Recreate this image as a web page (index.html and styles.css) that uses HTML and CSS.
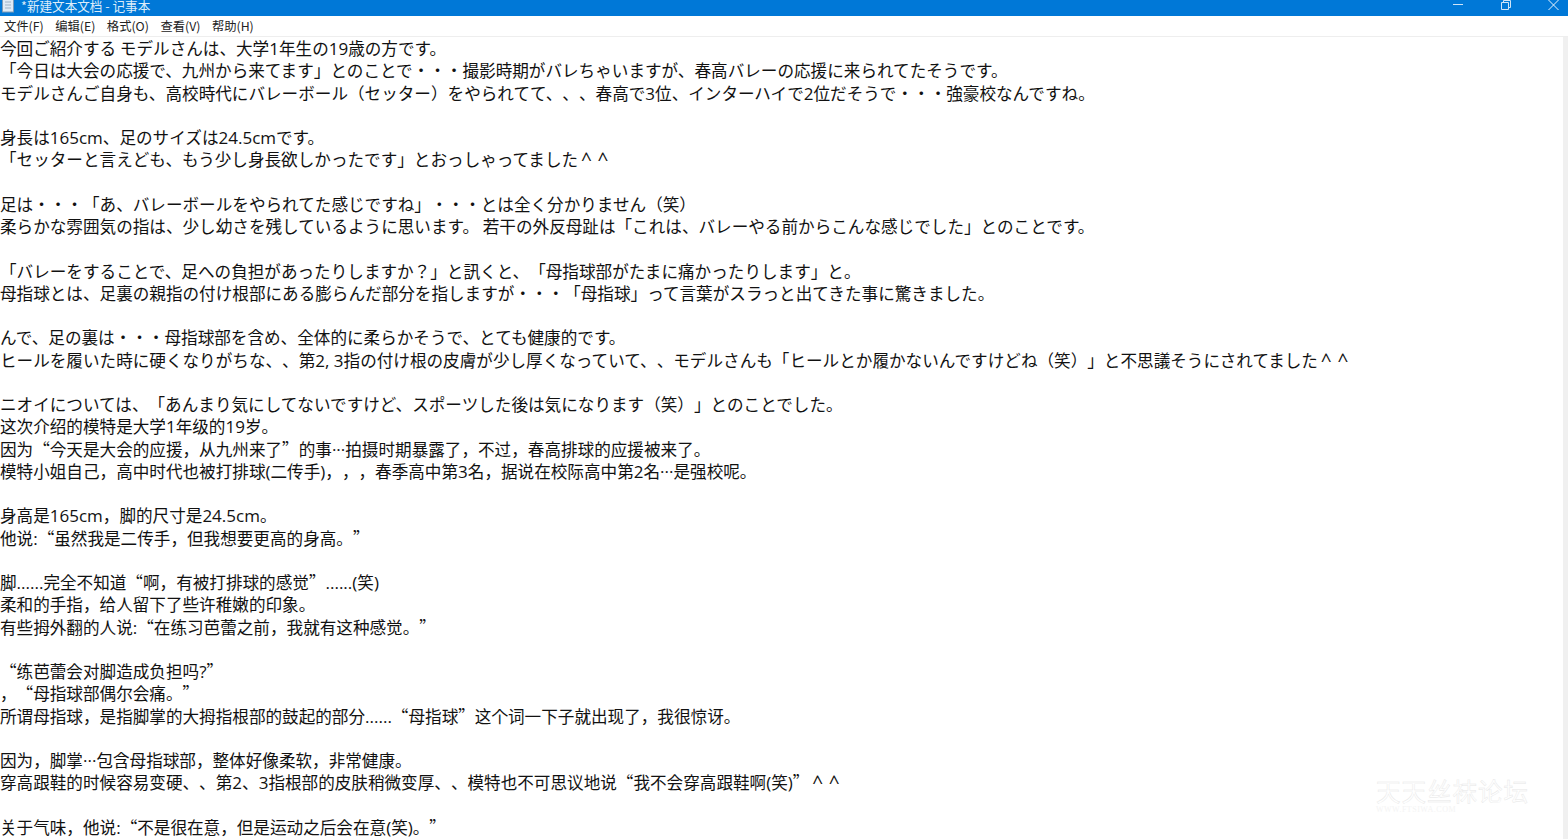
FILE: index.html
```html
<!DOCTYPE html>
<html lang="ja">
<head>
<meta charset="utf-8">
<title>*新建文本文档 - 记事本</title>
<link rel="stylesheet" href="styles.css">
</head>
<body>
<div class="window">
  <header class="titlebar">
    <div class="title-left">
      <svg class="app-icon" width="15" height="13" viewBox="0 0 15 13"><rect x="2.500" y="-2" width="11" height="14" fill="#dfeaf5" stroke="#7f9cb6"/><path d="M5 2h6M5 5h6M5 8h6" stroke="#9db2c6"/></svg>
      <span class="title-text">*新建文本文档 - 记事本</span>
    </div>
    <div class="win-buttons">
      <svg class="win-btn" width="48" height="12" viewBox="0 0 48 12"><path d="M19 4.500h10" stroke="#cfe4f7"/></svg>
      <svg class="win-btn" width="48" height="12" viewBox="0 0 48 12"><path d="M19.500 2.500h7v7h-7zM21.500 2.500v-2h7v7h-2" stroke="#cfe4f7" fill="none"/></svg>
      <svg class="win-btn" width="48" height="12" viewBox="0 0 48 12"><path d="M18.500 0l10 10M28.500 0l-10 10" stroke="#eaf4fc" fill="none"/></svg>
    </div>
  </header>
  <nav class="menubar">
    <span>文件(F)</span><span>编辑(E)</span><span>格式(O)</span><span>查看(V)</span><span>帮助(H)</span>
  </nav>
  <main class="editor">
    <div class="text">
      <p>今回ご紹介する モデルさんは、大学<b>1</b>年生の<b>19</b>歳の方です。</p>
      <p>「今日は大会の応援で、九州から来てます」とのことで・・・撮影時期がバレちゃいますが、春高バレーの応援に来られてたそうです。</p>
      <p>モデルさんご自身も、高校時代にバレーボール（セッター）をやられてて、、、春高で<b>3</b>位、インターハイで<b>2</b>位だそうで・・・強豪校なんですね。</p>
      <p>&nbsp;</p>
      <p>身長は<b>165cm</b>、足のサイズは<b>24.5cm</b>です。</p>
      <p>「セッターと言えども、もう少し身長欲しかったです」とおっしゃってました<b class="caret">^</b><b class="caret">^</b></p>
      <p>&nbsp;</p>
      <p>足は・・・「あ、バレーボールをやられてた感じですね」・・・とは全く分かりません（笑）</p>
      <p>柔らかな雰囲気の指は、少し幼さを残しているように思います。 若干の外反母趾は「これは、バレーやる前からこんな感じでした」とのことです。</p>
      <p>&nbsp;</p>
      <p>「バレーをすることで、足への負担があったりしますか？」と訊くと、「母指球部がたまに痛かったりします」と。</p>
      <p>母指球とは、足裏の親指の付け根部にある膨らんだ部分を指しますが・・・「母指球」って言葉がスラっと出てきた事に驚きました。</p>
      <p>&nbsp;</p>
      <p>んで、足の裏は・・・母指球部を含め、全体的に柔らかそうで、とても健康的です。</p>
      <p>ヒールを履いた時に硬くなりがちな、、第<b>2, 3</b>指の付け根の皮膚が少し厚くなっていて、、モデルさんも「ヒールとか履かないんですけどね（笑）」と不思議そうにされてました<b class="caret">^</b><b class="caret">^</b></p>
      <p>&nbsp;</p>
      <p>ニオイについては、「あんまり気にしてないですけど、スポーツした後は気になります（笑）」とのことでした。</p>
      <p class="zh">这次介绍的模特是大学<b>1</b>年级的<b>19</b>岁。</p>
      <p class="zh">因为<i class="ql">“</i>今天是大会的应援，从九州来了<i class="qr">”</i>的事<b>···</b>拍摄时期暴露了，不过，春高排球的应援被来了。</p>
      <p class="zh">模特小姐自己，高中时代也被打排球<b>(</b>二传手<b>)</b>，，，春季高中第<b>3</b>名，据说在校际高中第<b>2</b>名<b>···</b>是强校呢。</p>
      <p>&nbsp;</p>
      <p class="zh">身高是<b>165cm</b>，脚的尺寸是<b>24.5cm</b>。</p>
      <p class="zh">他说<b>:</b><i class="ql">“</i>虽然我是二传手，但我想要更高的身高。<i class="qr">”</i></p>
      <p>&nbsp;</p>
      <p class="zh">脚<b>......</b>完全不知道<i class="ql">“</i>啊，有被打排球的感觉<i class="qr">”</i><b>......(</b>笑<b>)</b></p>
      <p class="zh">柔和的手指，给人留下了些许稚嫩的印象。</p>
      <p class="zh">有些拇外翻的人说<b>:</b><i class="ql">“</i>在练习芭蕾之前，我就有这种感觉。<i class="qr">”</i></p>
      <p>&nbsp;</p>
      <p class="zh"><i class="ql">“</i>练芭蕾会对脚造成负担吗<b>?</b><i class="qr">”</i></p>
      <p class="zh">，<i class="ql">“</i>母指球部偶尔会痛。<i class="qr">”</i></p>
      <p class="zh">所谓母指球，是指脚掌的大拇指根部的鼓起的部分<b>......</b><i class="ql">“</i>母指球<i class="qr">”</i>这个词一下子就出现了，我很惊讶。</p>
      <p>&nbsp;</p>
      <p class="zh">因为，脚掌<b>···</b>包含母指球部，整体好像柔软，非常健康。</p>
      <p class="zh">穿高跟鞋的时候容易变硬、、第<b>2</b>、<b>3</b>指根部的皮肤稍微变厚、、模特也不可思议地说<i class="ql">“</i>我不会穿高跟鞋啊<b>(</b>笑<b>)</b><i class="qr">”</i><b class="caret">^</b><b class="caret">^</b></p>
      <p>&nbsp;</p>
      <p class="zh">关于气味，他说<b>:</b><i class="ql">“</i>不是很在意，但是运动之后会在意<b>(</b>笑<b>)</b>。<i class="qr">”</i></p>
    </div>
    <div class="watermark">
      <div class="wm-main">天天丝袜论坛</div>
      <div class="wm-sub">WWW.FTSIWA.COM</div>
    </div>
  </main>
</div>
</body>
</html>
```
FILE: styles.css
```css
html, body {
  margin: 0;
  padding: 0;
  height: 100%;
  overflow: hidden;
  background: #fff;
}
.window {
  height: 839px;
  display: flex;
  flex-direction: column;
  font-family: "Noto Sans CJK JP", "Noto Sans", sans-serif;
  color: #111;
  overflow: hidden;
}
.titlebar {
  height: 16px;
  background: #0078d7;
  color: #fff;
  display: flex;
  justify-content: space-between;
  align-items: flex-start;
  flex: none;
}
.title-left { display: flex; align-items: flex-start; gap: 6px; }
.app-icon { flex: none; }
.title-text { font-size: 12.600px; line-height: 11px; color: #dcecf9; }
.win-buttons { display: flex; margin-right: -10px; }
.win-btn { display: block; flex: none; }
.menubar {
  height: 21px;
  flex: none;
  display: flex;
  align-items: center;
  gap: 11.500px;
  padding-left: 4px;
  padding-bottom: 1px;
  font-size: 12.300px;
  color: #222;
  border-bottom: 1px solid #eee;
  box-sizing: border-box;
}
.editor {
  flex: 1;
  position: relative;
  overflow: hidden;
  border-right: 5px solid #f0f0f0;
}
.text {
  font-size: 16.600px;
  text-spacing-trim: space-all;
  font-feature-settings: "palt" 0;
}
.text p {
  margin: 0;
  height: 22.260px;
  line-height: 22.260px;
  white-space: pre;
}
.text b {
  font-family: "Open Sans", sans-serif;
  font-weight: 400;
  font-size: 17px;
}
.text b.caret {
  display: inline-block;
  width: 16.600px;
  text-align: center;
  font-size: 19px;
  line-height: 1;
}
.text i { display: inline-block; width: 16.600px; font-style: normal; }
.text i.ql { text-align: right; }
.text i.qr { text-align: left; }
.zh { font-family: "Noto Sans CJK SC", "Noto Sans", sans-serif; }
.watermark {
  position: absolute;
  right: 34px;
  bottom: 24px;
  font-family: "Noto Sans CJK SC", sans-serif;
}
.wm-main {
  font-size: 24.500px;
  line-height: 28px;
  letter-spacing: 1px;
  color: #fff;
  -webkit-text-stroke: 0.400px #e6e6e6;
}
.wm-sub {
  font-family: "Liberation Serif", serif;
  font-size: 8px;
  line-height: 10px;
  letter-spacing: 0.500px;
  color: #f4f4f4;
}
```
